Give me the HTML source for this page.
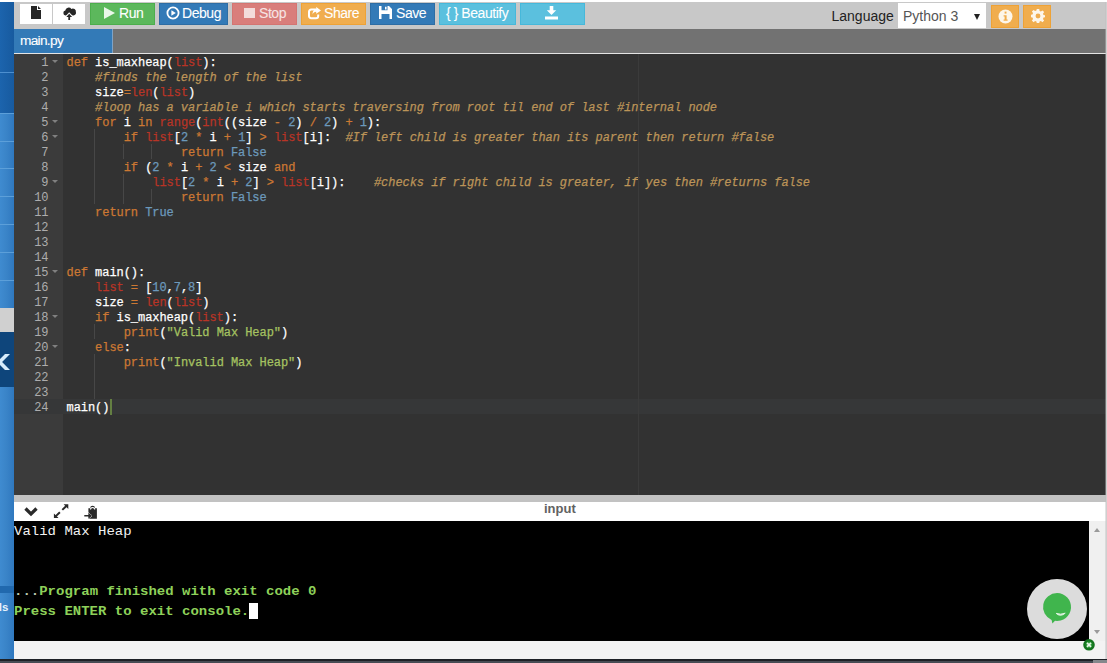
<!DOCTYPE html>
<html>
<head>
<meta charset="utf-8">
<title>main.py</title>
<style>
*{box-sizing:border-box;margin:0;padding:0}
html,body{width:1107px;height:663px;overflow:hidden;background:#fff;font-family:"Liberation Sans",sans-serif}
#root{position:relative;width:1107px;height:663px;overflow:hidden;background:#fff}
.abs{position:absolute}
/* sidebar */
#side{left:0;top:2px;width:14px;height:657px;background:linear-gradient(90deg,#3f8bd0 0%,#3a84c8 45%,#2f78bf 100%);overflow:hidden}
#side div{position:absolute;left:0;width:14px}
/* toolbar */
#toolbar{left:14px;top:2px;width:1092px;height:27px;background:#c8c8c8}
.btn{position:absolute;top:3px;height:22px;color:#fff;font-size:14px;letter-spacing:-0.45px;line-height:20px;white-space:nowrap;-webkit-text-stroke:0.08px}
.btn span{position:absolute;top:-1px}
.wbtn{top:4px;height:20px;background:#fff}
.obtn{top:5px;width:28px;height:23px;background:#f0ad4e;border:1px solid #eea236}
/* tab bar */
#tabbar{left:14px;top:29px;width:1092px;height:24px;background:#727272}
#tab{left:14px;top:29px;width:99px;height:24px;background:#337ab7;color:#fff;font-size:13.7px;letter-spacing:-0.7px;line-height:23.5px;-webkit-text-stroke:0.1px;padding-left:6px;border-right:1px solid #7fa3c6}
#tabline{left:14px;top:53px;width:1092px;height:1px;background:#e4e4e4}
/* editor */
#editor{left:14px;top:54px;width:1092px;height:441px;background:#323232;overflow:hidden}
#gutter{left:0;top:0;width:49px;height:441px;background:#3b3b3b}
#code{left:0;top:0;width:1092px;height:441px;font-family:"Liberation Mono",monospace;font-size:12px;letter-spacing:-0.053px;color:#fff;white-space:pre}
.ln{position:absolute;left:0;height:15px;line-height:15px;width:1092px}
.ln .n{position:absolute;top:2px;left:0;width:34.5px;text-align:right;color:#adadad;font-size:12px;letter-spacing:-0.053px}
.ln .t{position:absolute;top:2px;left:52.5px;-webkit-text-stroke:0.25px}
.k{color:#cc7833}.s{color:#a5c261}.c{color:#bc9458;font-style:italic}.f{color:#b83426}.v{color:#6c99bb}

#code{--cw:7.147px}
.ln.act{background:#363738}
.fw{position:absolute;left:38.4px;top:6px;width:0;height:0;border-left:3.2px solid transparent;border-right:3.2px solid transparent;border-top:3.5px solid #808080}
.ig{position:absolute;top:0;width:1px;height:15px;background:#474747}
#pm{position:absolute;left:623.5px;top:0;width:1px;height:441px;background:#3b3b3b}
#cur{position:absolute;left:95.5px;top:345px;width:2px;height:16px;background:#647f42}
/* console */
#split{left:14px;top:495px;width:1092px;height:7px;background:#c2c2c2}
#cbar{left:14px;top:502px;width:1092px;height:19px;background:#fff}
#console{left:14px;top:521px;width:1075px;height:120px;background:#000;overflow:hidden}
.cl{position:absolute;left:0;height:23px;font-family:"Liberation Mono",monospace;font-size:14px;line-height:23px;color:#f2f2f2;white-space:pre;transform:scaleY(0.87);transform-origin:0 0;margin-top:0.5px}
#console b{color:#8ed15a}
#ccur{position:absolute;left:235px;top:82px;width:9px;height:16px;background:#fff}
#chat{left:1027px;top:579px;width:60px;height:60px}
#cscroll{left:1089px;top:521px;width:17px;height:120px;background:#f0f0f0}
#cbottom{left:14px;top:641px;width:1092px;height:18px;background:#f3f3f3}
#bottom{left:0;top:659px;width:1107px;height:4px;background:#1e2126}
#redge{left:1106px;top:2px;width:1px;height:657px;background:#cfcfcf}
</style>
</head>
<body>
<div id="root">
<div id="side" class="abs">
<div style="top:0;height:111px;background:linear-gradient(90deg,#1c64ad,#175a9f)"></div>
<div style="top:70px;height:1px;background:#4d8fcf"></div>
<div style="top:111px;height:1px;background:#5c9fd9"></div>
<div style="top:139px;height:1px;background:#5c9fd9"></div>
<div style="top:166px;height:1px;background:#5c9fd9"></div>
<div style="top:194px;height:1px;background:#5c9fd9"></div>
<div style="top:222px;height:1px;background:#5c9fd9"></div>
<div style="top:250px;height:1px;background:#5c9fd9"></div>
<div style="top:278px;height:1px;background:#5c9fd9"></div>
<div style="top:306px;height:24px;background:#d0d0d0"></div>
<div style="top:330px;height:55px;background:#0e457b"></div>
<svg style="position:absolute;left:0;top:350px" width="14" height="20" viewBox="0 0 14 20"><path d="M5 2H10L2.1 10L10 18H5L-2.9 10Z" fill="#d7ecfb"/></svg>
<div style="top:584px;height:7px;background:#2169ae"></div>
<div style="top:597px;height:16px;line-height:16px;font-size:11.5px;font-weight:bold;color:#e6f2fc;left:-1.2px;width:16px">ls</div>
</div>
<div id="toolbar" class="abs"></div>
<div class="abs wbtn" style="left:20px;width:32px"></div>
<div class="abs wbtn" style="left:53px;width:32px"></div>
<svg class="abs" style="left:31px;top:6px" width="10" height="13" viewBox="0 0 10 13"><path d="M0 0H6V4H10V13H0Z M7 0L10 3H7Z" fill="#262626"/></svg>
<svg class="abs" style="left:62px;top:6px" width="15" height="15" viewBox="0 0 15 15"><path d="M3.4 9.4A2.5 2.5 0 0 1 3.3 4.5A3.4 3.4 0 0 1 9.4 2.9A3.1 3.1 0 0 1 13.9 6A2.6 2.6 0 0 1 11.6 9.4Z" fill="#262626"/><path d="M7.2 6.3L11.2 10.6H3.2Z" fill="#fff"/><path d="M7.2 7.7L10.1 10.9H8.1V14H6.3V10.9H4.3Z" fill="#262626"/></svg>
<div class="btn" style="left:90px;width:65px;background:#5cb85c;border:1px solid #4cae4c"><svg class="abs" style="left:13px;top:3px" width="11" height="12" viewBox="0 0 11 12"><path d="M0 0L11 6L0 12Z" fill="#eaf7ea"/></svg><span style="left:28px">Run</span></div>
<div class="btn" style="left:159px;width:69px;background:#337ab7;border:1px solid #2e6da4"><svg class="abs" style="left:6px;top:2px" width="14" height="14" viewBox="0 0 14 14"><circle cx="7" cy="7" r="5.6" fill="none" stroke="#fff" stroke-width="1.8"/><path d="M5.4 4.2L9.8 7L5.4 9.8Z" fill="#fff"/></svg><span style="left:22px">Debug</span></div>
<div class="btn" style="left:232px;width:65px;background:#d97e7b;border:1px solid #d47572;color:#f6e4e3"><i class="abs" style="left:11px;top:4px;width:11px;height:10px;background:#f3dcdb"></i><span style="left:26px">Stop</span></div>
<div class="btn" style="left:301px;width:65px;background:#f0ad4e;border:1px solid #eea236"><svg class="abs" style="left:5px;top:3px" width="14" height="13" viewBox="0 0 14 13"><path d="M9 2.6H4.2A2.2 2.2 0 0 0 2 4.8V9A2.2 2.2 0 0 0 4.2 11.2H9A2.2 2.2 0 0 0 11.2 9V7.6" fill="none" stroke="#fff" stroke-width="2"/><path d="M9.2 0L14 3.4L9.2 6.8V4.8C7.4 4.8 6.2 5.6 5.6 7.4C5.4 4.4 6.8 2.2 9.2 2Z" fill="#fff"/></svg><span style="left:22px">Share</span></div>
<div class="btn" style="left:370px;width:65px;background:#337ab7;border:1px solid #2e6da4"><svg class="abs" style="left:8px;top:2px" width="13" height="13" viewBox="0 0 13 13"><path d="M0 0H10L13 3V13H0Z M2.5 0V4.2H8.5V0Z M6 0.8H7.6V3.4H6Z M2.5 13V8H10.5V13Z" fill="#fff" fill-rule="evenodd"/></svg><span style="left:25px">Save</span></div>
<div class="btn" style="left:439px;width:77px;background:#5bc0de;border:1px solid #46b8da"><span style="left:6px">{ } Beautify</span></div>
<div class="btn" style="left:520px;width:65px;background:#5bc0de;border:1px solid #46b8da"><svg class="abs" style="left:23px;top:2px" width="15" height="14" viewBox="0 0 15 14"><path d="M5.7 0H9.3V4.3H12.2L7.5 9L2.8 4.3H5.7Z M1 10.4H14V13.4H1Z" fill="#fff"/></svg></div>
<div class="abs" style="left:831.5px;top:8px;font-size:14px;line-height:16px;color:#222">Language</div>
<div class="abs" style="left:898px;top:3px;width:88px;height:25px;background:#fff"><span class="abs" style="left:5px;top:5px;font-size:14px;line-height:16px;color:#555">Python 3</span><i class="abs" style="left:76px;top:10.5px;width:0;height:0;border-left:3.5px solid transparent;border-right:3.5px solid transparent;border-top:6px solid #222"></i></div>
<div class="abs obtn" style="left:991px"><svg class="abs" style="left:6px;top:3px" width="15" height="15" viewBox="0 0 15 15"><circle cx="7.5" cy="7.5" r="7" fill="#fdf6ea"/><rect x="6.6" y="2.6" width="1.9" height="2" fill="#f0ad4e"/><path d="M5.6 6.2H8.6V10.6H9.6V11.8H5.6V10.6H6.6V7.4H5.6Z" fill="#f0ad4e"/></svg></div>
<div class="abs obtn" style="left:1023px"><svg class="abs" style="left:6.5px;top:3px" width="14" height="14" viewBox="0 0 16 16"><path id="gear" fill="#fdf6ea" fill-rule="evenodd" d="M6.6 0H9.4L9.8 2.2L11.3 2.9L13.1 1.6L15 3.5L13.7 5.3L14.3 6.8L16 7.2V9.4L14.3 9.8L13.7 11.3L15 13.1L13.1 15L11.3 13.7L9.8 14.3L9.4 16H6.6L6.2 14.3L4.7 13.7L2.9 15L1 13.1L2.3 11.3L1.7 9.8L0 9.4V6.6L1.7 6.2L2.3 4.7L1 2.9L2.9 1L4.7 2.3L6.2 1.7Z M8 5.2A2.8 2.8 0 1 0 8 10.8A2.8 2.8 0 1 0 8 5.2Z"/></svg></div>
<div id="tabbar" class="abs"></div>
<div id="tab" class="abs">main.py</div>
<div id="tabline" class="abs"></div>
<div id="editor" class="abs">
<div id="gutter" class="abs"></div>
<div id="code" class="abs">
<div class="ln" style="top:0px"><span class="n">1</span><i class="fw"></i><span class="t"><span class="k">def</span> is_maxheap(<span class="f">list</span>):</span></div>
<div class="ln" style="top:15px"><span class="n">2</span><span class="t">    <span class="c">#finds the length of the list</span></span></div>
<div class="ln" style="top:30px"><span class="n">3</span><span class="t">    size<span class="k">=</span><span class="f">len</span>(<span class="f">list</span>)</span></div>
<div class="ln" style="top:45px"><span class="n">4</span><span class="t">    <span class="c">#loop has a variable i which starts traversing from root til end of last #internal node</span></span></div>
<div class="ln" style="top:60px"><span class="n">5</span><i class="fw"></i><span class="t">    <span class="k">for</span> i <span class="k">in</span> <span class="f">range</span>(<span class="f">int</span>((size <span class="k">-</span> <span class="v">2</span>) <span class="k">/</span> <span class="v">2</span>) <span class="k">+</span> <span class="v">1</span>):</span></div>
<div class="ln" style="top:75px"><span class="n">6</span><i class="fw"></i><i class="ig" style="left:calc(52.5px + 4*var(--cw) - 1px)"></i><span class="t">        <span class="k">if</span> <span class="f">list</span>[<span class="v">2</span> <span class="k">*</span> i <span class="k">+</span> <span class="v">1</span>] <span class="k">&gt;</span> <span class="f">list</span>[i]:  <span class="c">#If left child is greater than its parent then return #false</span></span></div>
<div class="ln" style="top:90px"><span class="n">7</span><i class="ig" style="left:calc(52.5px + 4*var(--cw) - 1px)"></i><i class="ig" style="left:calc(52.5px + 8*var(--cw) - 1px)"></i><i class="ig" style="left:calc(52.5px + 12*var(--cw) - 1px)"></i><span class="t">                <span class="k">return</span> <span class="v">False</span></span></div>
<div class="ln" style="top:105px"><span class="n">8</span><i class="ig" style="left:calc(52.5px + 4*var(--cw) - 1px)"></i><span class="t">        <span class="k">if</span> (<span class="v">2</span> <span class="k">*</span> i <span class="k">+</span> <span class="v">2</span> <span class="k">&lt;</span> size <span class="k">and</span></span></div>
<div class="ln" style="top:120px"><span class="n">9</span><i class="fw"></i><i class="ig" style="left:calc(52.5px + 4*var(--cw) - 1px)"></i><i class="ig" style="left:calc(52.5px + 8*var(--cw) - 1px)"></i><span class="t">            <span class="f">list</span>[<span class="v">2</span> <span class="k">*</span> i <span class="k">+</span> <span class="v">2</span>] <span class="k">&gt;</span> <span class="f">list</span>[i]):    <span class="c">#checks if right child is greater, if yes then #returns false</span></span></div>
<div class="ln" style="top:135px"><span class="n">10</span><i class="ig" style="left:calc(52.5px + 4*var(--cw) - 1px)"></i><i class="ig" style="left:calc(52.5px + 8*var(--cw) - 1px)"></i><i class="ig" style="left:calc(52.5px + 12*var(--cw) - 1px)"></i><span class="t">                <span class="k">return</span> <span class="v">False</span></span></div>
<div class="ln" style="top:150px"><span class="n">11</span><span class="t">    <span class="k">return</span> <span class="v">True</span></span></div>
<div class="ln" style="top:165px"><span class="n">12</span><span class="t"></span></div>
<div class="ln" style="top:180px"><span class="n">13</span><span class="t"></span></div>
<div class="ln" style="top:195px"><span class="n">14</span><span class="t"></span></div>
<div class="ln" style="top:210px"><span class="n">15</span><i class="fw"></i><span class="t"><span class="k">def</span> main():</span></div>
<div class="ln" style="top:225px"><span class="n">16</span><span class="t">    <span class="f">list</span> <span class="k">=</span> [<span class="v">10</span>,<span class="v">7</span>,<span class="v">8</span>]</span></div>
<div class="ln" style="top:240px"><span class="n">17</span><span class="t">    size <span class="k">=</span> <span class="f">len</span>(<span class="f">list</span>)</span></div>
<div class="ln" style="top:255px"><span class="n">18</span><i class="fw"></i><span class="t">    <span class="k">if</span> is_maxheap(<span class="f">list</span>):</span></div>
<div class="ln" style="top:270px"><span class="n">19</span><i class="ig" style="left:calc(52.5px + 4*var(--cw) - 1px)"></i><span class="t">        <span class="k">print</span>(<span class="s">&quot;Valid Max Heap&quot;</span>)</span></div>
<div class="ln" style="top:285px"><span class="n">20</span><i class="fw"></i><span class="t">    <span class="k">else</span>:</span></div>
<div class="ln" style="top:300px"><span class="n">21</span><i class="ig" style="left:calc(52.5px + 4*var(--cw) - 1px)"></i><span class="t">        <span class="k">print</span>(<span class="s">&quot;Invalid Max Heap&quot;</span>)</span></div>
<div class="ln" style="top:315px"><span class="n">22</span><i class="ig" style="left:calc(52.5px + 4*var(--cw) - 1px)"></i><span class="t">    </span></div>
<div class="ln" style="top:330px"><span class="n">23</span><i class="ig" style="left:calc(52.5px + 4*var(--cw) - 1px)"></i><span class="t">    </span></div>
<div class="ln act" style="top:345px"><span class="n">24</span><span class="t">main()</span></div>
<i id="pm"></i><i id="cur"></i>
</div>
</div>
<div id="split" class="abs"></div>
<div id="cbar" class="abs"><svg class="abs" style="left:10px;top:5px" width="14" height="10" viewBox="0 0 14 10"><path d="M1.5 1.5L7 7L12.5 1.5" fill="none" stroke="#2a2a2a" stroke-width="3.3"/></svg>
<svg class="abs" style="left:39px;top:2px" width="16" height="15" viewBox="0 0 16 15"><path d="M9.3 5.9L13.6 1.8M6.9 8.3L2.6 12.4" stroke="#2a2a2a" stroke-width="2" fill="none"/><path d="M10.6 0.2H15.3V4.9Z M0.9 9.4V14.1H5.6Z" fill="#2a2a2a"/></svg>
<svg class="abs" style="left:70px;top:3px" width="14" height="14" viewBox="0 0 14 14"><path d="M4.4 3.2H6.2A2.4 2.4 0 0 1 11 3.2H12.9V13.7H4.4Z" fill="#2a2a2a"/><path d="M6.5 4.6A2.1 2.1 0 0 1 10.7 4.6" fill="none" stroke="#fff" stroke-width="1.1"/><path d="M0.3 10H4.4V7.8L8 10.8L4.4 13.8V11.6H0.3Z" fill="#2a2a2a" stroke="#fff" stroke-width="0.9" paint-order="stroke"/></svg>
<span class="abs" style="left:530px;top:0;font-size:13px;font-weight:bold;line-height:14px;color:#626262">input</span></div>
<div id="console" class="abs"><div class="cl" style="top:0px">Valid Max Heap</div>
<div class="cl" style="top:60px"><b><span style="color:#bccbb0">...</span>Program finished with exit code 0</b></div>
<div class="cl" style="top:80px"><b>Press ENTER to exit console.</b></div>
<i id="ccur"></i></div>
<div id="cscroll" class="abs"><i class="abs" style="left:5px;top:7.4px;border-left:3.6px solid transparent;border-right:3.6px solid transparent;border-bottom:4px solid #9a9a9a"></i><i class="abs" style="left:5px;top:108.6px;border-left:3.6px solid transparent;border-right:3.6px solid transparent;border-top:4px solid #9a9a9a"></i></div>
<div id="cbottom" class="abs"></div>
<div id="chat" class="abs"><svg width="60" height="60" viewBox="0 0 60 60"><circle cx="30" cy="30" r="30" fill="#dcdcdc"/><path d="M30.1 14A14 14 0 1 1 28 41.85L25.4 44.4L24.6 40.9A14 14 0 0 1 30.1 14Z" fill="#40b54d"/><path d="M29.2 34.4Q33.6 38.2 38.2 34.2Q33.6 36.0 29.2 34.4Z" fill="#def3e0" stroke="#def3e0" stroke-width="1"/></svg></div>
<svg class="abs" style="left:1082px;top:638px" width="14" height="14" viewBox="0 0 14 14"><circle cx="7" cy="6.8" r="4.6" fill="#2f9a3a" stroke="#14741f" stroke-width="2.4"/><path d="M5 4.8L9 8.8M9 4.8L5 8.8" stroke="#e9f7e9" stroke-width="1.7"/></svg>
<div id="bottom" class="abs"><i class="abs" style="left:0;top:2px;width:1093px;height:2px;background:#474c54"></i><i class="abs" style="left:1093px;top:1px;width:14px;height:3px;background:#85888c"></i></div>
<div id="redge" class="abs"></div><div class="abs" style="left:1105px;top:2px;width:1px;height:657px;background:rgba(190,190,190,0.45)"></div>
</div>
</body>
</html>
